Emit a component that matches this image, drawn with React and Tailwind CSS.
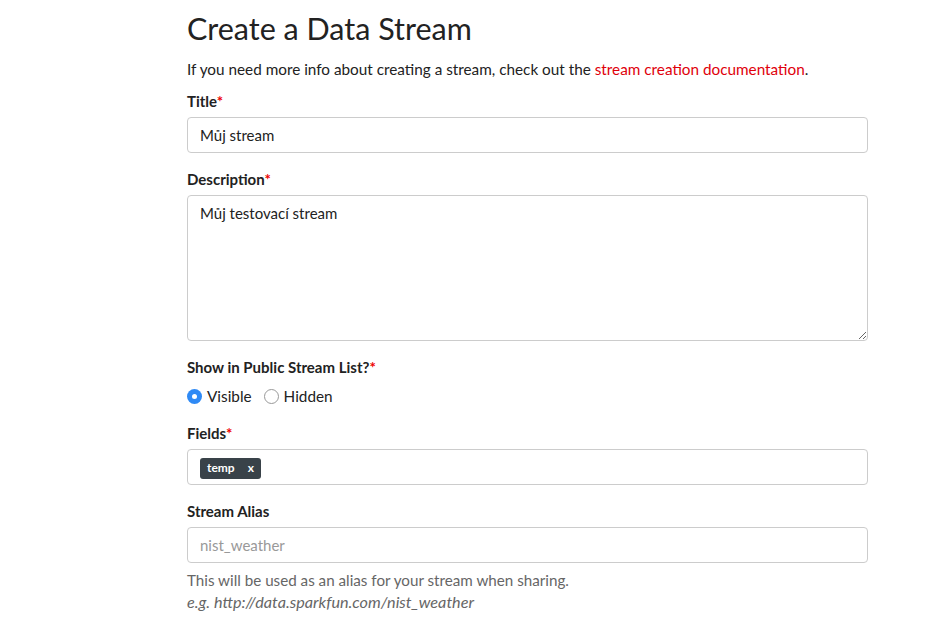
export default function App() {
    const font = { fontFamily: 'Lato, "Noto Sans", sans-serif' };

    return (
        <div className="min-h-screen bg-white text-[#222]" style={font}>
            <div className="w-[681px] ml-[187px] pt-[10px]">
                {/* Header */}
                <h1 className="text-[30.5px] leading-[36px] font-normal text-[#222]">Create a Data Stream</h1>
                <p className="mt-[13px] text-[15.3px] leading-[20px]">
                    If you need more info about creating a stream, check out the{' '}
                    <a href="#" className="text-[#e0000b]">stream creation documentation</a>.
                </p>

                {/* Title */}
                <div className="mt-[12px]">
                    <label className="block text-[15px] leading-[20px] font-bold">
                        Title<span className="text-[#e00]">*</span>
                    </label>
                    <input
                        className="mt-[6px] block w-full h-[36px] px-[12px] border border-[#ccc] rounded-[4px] text-[15px] outline-none"
                        defaultValue="Můj stream"
                    />
                </div>

                {/* Description */}
                <div className="mt-[16px]">
                    <label className="block text-[15px] leading-[20px] font-bold">
                        Description<span className="text-[#e00]">*</span>
                    </label>
                    <textarea
                        className="mt-[6px] block w-full h-[146px] px-[12px] py-[7px] border border-[#ccc] rounded-[4px] text-[15px] leading-[20px] outline-none"
                        defaultValue="Můj testovací stream"
                    />
                </div>

                {/* Visibility */}
                <div className="mt-[16px]">
                    <label className="block text-[15px] leading-[20px] font-bold">
                        Show in Public Stream List?<span className="text-[#e00]">*</span>
                    </label>
                    <div className="mt-[9px] flex items-center gap-[12px] text-[15.3px] leading-[20px]">
                        <span className="flex items-center gap-[5px]">
                            <span className="w-[15px] h-[15px] rounded-full bg-[#2f8af5] flex items-center justify-center">
                                <span className="w-[5px] h-[5px] rounded-full bg-white" />
                            </span>
                            Visible
                        </span>
                        <span className="flex items-center gap-[5px]">
                            <span className="w-[15px] h-[15px] rounded-full border border-[#999] bg-white" />
                            Hidden
                        </span>
                    </div>
                </div>

                {/* Fields */}
                <div className="mt-[17px]">
                    <label className="block text-[15px] leading-[20px] font-bold">
                        Fields<span className="text-[#e00]">*</span>
                    </label>
                    <div className="mt-[6px] h-[36px] px-[12px] pt-[2px] border border-[#ccc] rounded-[4px] flex items-center">
                        <span className="flex items-center h-[21px] px-[7px] gap-[13px] rounded-[3px] bg-[#394249] text-white text-[12px] font-bold">
                            <span>temp</span>
                            <span>x</span>
                        </span>
                    </div>
                </div>

                {/* Stream Alias */}
                <div className="mt-[16px]">
                    <label className="block text-[15px] leading-[20px] font-bold">Stream Alias</label>
                    <input
                        className="mt-[6px] block w-full h-[36px] px-[12px] border border-[#ccc] rounded-[4px] text-[15px] outline-none placeholder:text-[#999]"
                        placeholder="nist_weather"
                    />
                    <p className="mt-[6px] text-[15.2px] leading-[22px] text-[#666]">
                        This will be used as an alias for your stream when sharing.
                        <br />
                        <em className="text-[16.2px]">e.g. http://data.sparkfun.com/nist_weather</em>
                    </p>
                </div>
            </div>
        </div>
    );
}
